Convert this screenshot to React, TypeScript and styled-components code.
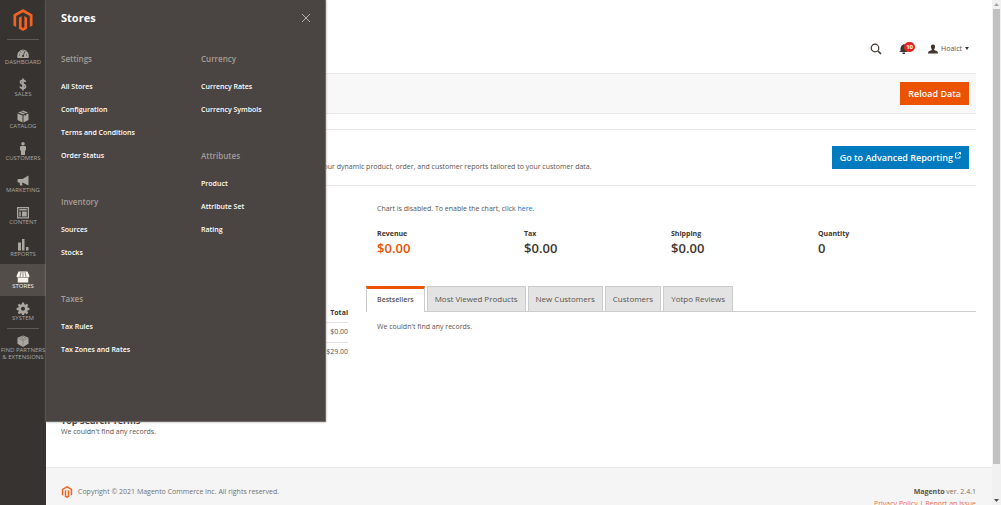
import React from "react";
import styled, { createGlobalStyle } from "styled-components";

const GlobalStyle = createGlobalStyle`
  * { box-sizing: border-box; }
  body {
    margin: 0;
    background: #fff;
    color: #5a534e;
    font-family: "Open Sans", "Noto Sans", sans-serif;
    font-size: 7px;
    line-height: 10px;
  }
  h1, h2, h3, p, ul, dl, dd { margin: 0; padding: 0; }
  ul { list-style: none; }
  a { color: inherit; text-decoration: none; }
  button { font: inherit; border: 0; padding: 0; cursor: pointer; }
  svg { display: block; }
`;

const Shell = styled.div`
  display: grid;
  grid-template-columns: 46px minmax(0, 1fr) 9px;
  height: 100vh;
  overflow: hidden;
`;

const Sidebar = styled.nav`
  background: #373330;
  color: #aaa6a0;
`;

const LogoLink = styled.a`
  display: flex;
  align-items: center;
  justify-content: center;
  height: 39px;
`;

const Divider = styled.div`
  height: 1px;
  margin: 0 7px;
  background: #5f5a55;
`;

const NavLink = styled.a<{ $active?: boolean }>`
  display: flex;
  flex-direction: column;
  align-items: center;
  height: 32px;
  padding-top: 6px;
  font-size: 6px;
  line-height: 7px;
  text-align: center;
  text-transform: uppercase;
  white-space: nowrap;
  background: ${(p) => (p.$active ? "#524d49" : "transparent")};
  color: ${(p) => (p.$active ? "#f7f3eb" : "#aaa6a0")};
`;

const NavIcon = styled.svg`
  width: 14px;
  height: 13px;
  fill: currentColor;
`;

const Main = styled.div`
  position: relative;
  display: flex;
  flex-direction: column;
  min-width: 0;
`;

const Menu = styled.section`
  position: absolute;
  top: 0;
  left: 0;
  z-index: 2;
  width: 280px;
  height: 422px;
  padding: 10px 0 0 15px;
  background: #4a4542;
  border-right: 1px solid #6f6b68;
  border-bottom: 1px solid #6f6b68;
  box-shadow: 0 0 2px #999;
  color: #fff;
`;

const MenuHeader = styled.header`
  display: flex;
  align-items: center;
  justify-content: space-between;
  height: 16px;
  padding-right: 14px;
  margin-bottom: 25px;
`;

const MenuTitle = styled.h2`
  font-size: 11px;
  line-height: 16px;
  font-weight: 700;
`;

const CloseButton = styled.button`
  background: none;
  color: #b5afa8;
`;

const MenuColumns = styled.div`
  display: grid;
  grid-template-columns: 140px 1fr;
`;

const MenuGroup = styled.section`
  margin-bottom: 27px;
`;

const GroupTitle = styled.h3`
  margin-bottom: 8px;
  color: #a79d95;
  font-size: 8px;
  line-height: 16px;
  font-weight: 600;
`;

const MenuLink = styled.a`
  display: block;
  line-height: 23px;
  font-weight: 600;
`;

const PageBody = styled.div`
  flex: 1 0 auto;
  padding: 0 16px 0 15px;
`;

const TopBar = styled.header`
  display: flex;
  align-items: center;
  justify-content: flex-end;
  gap: 13px;
  height: 73px;
  padding: 24px 7px 0 0;
`;

const IconButton = styled.button`
  position: relative;
  background: none;
  color: #41362f;
`;

const SearchButton = styled(IconButton)`
  padding-right: 4px;
`;

const Badge = styled.span`
  position: absolute;
  top: -2px;
  left: 5px;
  min-width: 11px;
  height: 10px;
  border-radius: 5px;
  background: #e22626;
  color: #fff;
  font-size: 6px;
  line-height: 10px;
  font-weight: 700;
`;

const UserButton = styled.button`
  display: flex;
  align-items: center;
  gap: 3px;
  background: none;
  color: #5a534e;
`;

const ActionBar = styled.div`
  display: flex;
  justify-content: flex-end;
  padding: 8px 7px;
  border-top: 1px solid #e8e8e8;
  border-bottom: 1px solid #e8e8e8;
  background: #f8f8f8;
`;

const ActionButton = styled.button<{ $tone: "orange" | "blue" }>`
  display: flex;
  align-items: center;
  gap: 2px;
  height: 23px;
  padding: 0 8px;
  background: ${(p) => (p.$tone === "orange" ? "#eb5202" : "#007bbf")};
  color: #fff;
  font-size: 9px;
  font-weight: 600;
  white-space: nowrap;
`;

const Reporting = styled.section`
  display: flex;
  align-items: flex-start;
  justify-content: space-between;
  height: 57px;
  margin-top: 15px;
  padding: 16px 7px 0 0;
  border-top: 1px solid #e8e8e8;
  border-bottom: 1px solid #e8e8e8;
`;

const ReportingText = styled.p`
  padding: 16px 0 0 16px;
  white-space: nowrap;
`;

const Dashboard = styled.div`
  display: grid;
  grid-template-columns: 8fr 17fr;
  gap: 18px;
`;

const Summary = styled.div`
  padding-top: 118px;
`;

const OrdersTable = styled.table`
  width: 100%;
  margin-bottom: 53px;
  border-collapse: collapse;
  text-align: right;
  th { height: 18px; padding: 0; color: #41362f; font-weight: 700; border-bottom: 1px solid #e3e3e3; }
  td { height: 20px; padding: 0; border-bottom: 1px solid #e3e3e3; }
  tr:last-child td { border-bottom: 0; }
`;

const SectionTitle = styled.h2`
  color: #41362f;
  font-size: 9px;
  line-height: 12px;
  font-weight: 700;
`;

const Stats = styled.div`
  padding-top: 18px;
`;

const ChartNote = styled.p`
  padding: 0 11px;
  margin-bottom: 15px;
  a { color: #007bdb; }
`;

const Totals = styled.dl`
  display: grid;
  grid-template-columns: repeat(4, 1fr);
  padding: 0 11px;
  margin-bottom: 29px;
  color: #41362f;
`;

const TotalLabel = styled.dt`
  line-height: 10px;
  font-weight: 700;
`;

const TotalValue = styled.dd<{ $accent?: boolean }>`
  font-size: 13px;
  line-height: 18px;
  font-weight: 600;
  color: ${(p) => (p.$accent ? "#eb5202" : "#41362f")};
`;

const Tabs = styled.div`
  display: flex;
  gap: 2px;
  border-bottom: 1px solid #ccc;
`;

const Tab = styled.button<{ $active?: boolean }>`
  height: ${(p) => (p.$active ? "26px" : "25px")};
  padding: ${(p) => (p.$active ? "0 10px 2px" : "0 7px")};
  margin-bottom: ${(p) => (p.$active ? "-1px" : "0")};
  border: 1px solid #ccc;
  border-top: ${(p) => (p.$active ? "3px solid #eb5202" : "1px solid #ccc")};
  border-bottom: 0;
  background: ${(p) => (p.$active ? "#fff" : "#e3e3e3")};
  color: #5a534e;
  font-size: ${(p) => (p.$active ? "7px" : "8px")};
  font-weight: ${(p) => (p.$active ? 600 : 400)};
  white-space: nowrap;
`;

const TabPanel = styled.div`
  padding: 10px 11px;
`;

const Footer = styled.footer`
  display: flex;
  flex: none;
  justify-content: space-between;
  height: 60px;
  margin-bottom: -22px;
  padding: 18px 16px 0 15px;
  border-top: 1px solid #e8e8e8;
  background: #f5f5f5;
  color: #757069;
  line-height: 12px;
`;

const Copyright = styled.p`
  display: flex;
  align-items: center;
  align-self: flex-start;
  gap: 5px;
`;

const FooterLinks = styled.div`
  text-align: right;
  a { color: #ef6d4f; }
  strong { color: #5a534e; }
`;

const ScrollTrack = styled.div`
  display: flex;
  flex-direction: column;
  align-items: center;
  padding: 3px 1px;
  background: #f1f1f1;
`;

const ScrollThumb = styled.div`
  flex: 13;
  width: 7px;
  margin-top: 3px;
  background: #c1c1c1;
`;

const ScrollRest = styled.div`
  flex: 1;
`;

const MagentoMark = ({ size }: { size: number }) => (
  <svg width={size} height={size} viewBox="0 0 24 24" fill="#f26322" aria-hidden="true">
    <path d="M12 24l-4.455-2.572v-12l2.97-1.715v12.001l1.485.902 1.485-.902V7.713l2.971 1.715v12L12 24zM22.391 6v12l-2.969 1.714V7.713L12 3.43 4.574 7.713v12.001L1.609 18V6L12 0l10.391 6z" />
  </svg>
);

const boxIcon = (
  <>
    <path d="M14 1L24 5L14 9L4 5ZM3 7L13 11V25L3 20ZM15 11L25 7V20L15 25Z" />
    <path d="M9 3L19 7V12" fill="none" stroke="#373330" strokeWidth="1.5" />
  </>
);

const navItems: { label: string; active?: boolean; icon: React.ReactNode }[] = [
  {
    label: "Dashboard",
    icon: (
      <>
        <path d="M3 24a11.5 13 0 1 1 22 0Z" />
        <path d="M14 20L18 10M6 18h2M9 11l1 2M14 8v2M20 18h2" stroke="#373330" strokeWidth="1.6" />
        <circle cx="14" cy="20" r="2.2" fill="#373330" />
      </>
    ),
  },
  {
    label: "Sales",
    icon: (
      <path
        d="M19 8C18 3.500 9 3.500 9 8.500C9 13 19 11.500 19 17C19 22 9 22 8.500 17M14 1V25"
        fill="none"
        stroke="currentColor"
        strokeWidth="3.400"
      />
    ),
  },
  { label: "Catalog", icon: boxIcon },
  {
    label: "Customers",
    icon: (
      <>
        <circle cx="14" cy="3.500" r="3.500" />
        <path d="M10 8h8q2 0 2 2v7h-2v9h-8v-9H8v-7q0-2 2-2Z" />
      </>
    ),
  },
  {
    label: "Marketing",
    icon: <path d="M25 3V23L14 17.500H12L13 23H8L7 17H4Q1 13.500 4 10H13Z" />,
  },
  {
    label: "Content",
    icon: (
      <>
        <path d="M2 2h24v23H2ZM4.500 4.500v18h19V4.500Z" fillRule="evenodd" />
        <path d="M6.500 6h15v3H6.500ZM6.500 11h3v10H6.500ZM12 11h9.500v10H12Z" />
      </>
    ),
  },
  { label: "Reports", icon: <path d="M4 9h6V25H4ZM12 2h5v23h-5ZM20 18h5v7h-5Z" /> },
  {
    label: "Stores",
    active: true,
    icon: (
      <>
        <path d="M5 3h18l4 9q0 3-3 3H4q-3 0-3-3ZM3.500 16h21v9h-21Z" />
        <path d="M10 4L8 14M14 4v10M18 4l2 10" stroke="#524d49" strokeWidth="1.200" />
      </>
    ),
  },
  {
    label: "System",
    icon: (
      <path
        fillRule="evenodd"
        d="M12 1h4l.6 3.400 2.200.9 2.900-2 2.800 2.800-2 2.900.9 2.200 3.400.6v4l-3.400.6-.9 2.200 2 2.900-2.800 2.800-2.900-2-2.200.9-.6 3.400h-4l-.6-3.400-2.200-.9-2.900 2-2.800-2.800 2-2.900-.9-2.200-3.400-.6v-4l3.400-.6.9-2.200-2-2.900 2.800-2.800 2.900 2 2.200-.9ZM14 9.500a4 4 0 1 0 0 8a4 4 0 1 0 0-8Z"
      />
    ),
  },
];

const menuColumns = [
  [
    { title: "Settings", links: ["All Stores", "Configuration", "Terms and Conditions", "Order Status"] },
    { title: "Inventory", links: ["Sources", "Stocks"] },
    { title: "Taxes", links: ["Tax Rules", "Tax Zones and Rates"] },
  ],
  [
    { title: "Currency", links: ["Currency Rates", "Currency Symbols"] },
    { title: "Attributes", links: ["Product", "Attribute Set", "Rating"] },
  ],
];

const totals = [
  { label: "Revenue", value: "$0.00", accent: true },
  { label: "Tax", value: "$0.00" },
  { label: "Shipping", value: "$0.00" },
  { label: "Quantity", value: "0" },
];

const tabs = ["Bestsellers", "Most Viewed Products", "New Customers", "Customers", "Yotpo Reviews"];

export default function App() {
  return (
    <Shell>
      <GlobalStyle />
      <Sidebar>
        <LogoLink href="#" aria-label="Magento">
          <MagentoMark size={22} />
        </LogoLink>
        <Divider />
        {navItems.map((item) => (
          <NavLink href="#" key={item.label} $active={item.active}>
            <NavIcon viewBox="0 0 28 26" aria-hidden="true">{item.icon}</NavIcon>
            {item.label}
          </NavLink>
        ))}
        <Divider />
        <NavLink href="#">
          <NavIcon viewBox="0 0 28 26" aria-hidden="true">
            <path d="M14 1L26 6V19L14 26L2 19V6Z" />
            <path d="M2 7L14 12L26 7M14 12V25" fill="none" stroke="#6b6661" strokeWidth="1" />
            <path d="M8 6h4M16 6h4M12 3h4M12 9h4" stroke="#5f5a55" strokeWidth="1.500" />
          </NavIcon>
          <span>
            Find Partners
            <br />& Extensions
          </span>
        </NavLink>
      </Sidebar>

      <Main>
        <Menu>
          <MenuHeader>
            <MenuTitle>Stores</MenuTitle>
            <CloseButton aria-label="Close">
              <svg width="10" height="10" viewBox="0 0 10 10" fill="none" stroke="currentColor">
                <path d="M1 1L9 9M9 1L1 9" />
              </svg>
            </CloseButton>
          </MenuHeader>
          <MenuColumns>
            {menuColumns.map((groups, i) => (
              <div key={i}>
                {groups.map((group) => (
                  <MenuGroup key={group.title}>
                    <GroupTitle>{group.title}</GroupTitle>
                    <ul>
                      {group.links.map((link) => (
                        <li key={link}>
                          <MenuLink href="#">{link}</MenuLink>
                        </li>
                      ))}
                    </ul>
                  </MenuGroup>
                ))}
              </div>
            ))}
          </MenuColumns>
        </Menu>

        <PageBody>
          <TopBar>
            <SearchButton aria-label="Search">
              <svg width="12" height="12" viewBox="0 0 12 12" fill="none" stroke="currentColor">
                <circle cx="5" cy="5" r="3.800" strokeWidth="1.200" />
                <path d="M8 8L11 11" strokeWidth="1.600" />
              </svg>
            </SearchButton>
            <IconButton aria-label="Notifications">
              <svg width="16" height="10" viewBox="0 0 16 10" fill="currentColor">
                <path d="M5 0Q8 1 8 4V7L9 8H0L1.500 7V4Q2 1 5 0ZM3.500 8.500H6V10H3.500Z" />
              </svg>
              <Badge>10</Badge>
            </IconButton>
            <UserButton>
              <svg width="10" height="10" viewBox="0 0 11 10" fill="#41362f">
                <path d="M5.500 0C7.500 0 8 1.500 7.700 3C7.500 4.500 6.800 5 6.800 6L10 7.500Q11 8 11 10H0Q0 8 1 7.500L4.200 6C4.200 5 3.500 4.500 3.300 3C3 1.500 3.500 0 5.500 0Z" />
              </svg>
              Hoaict
              <svg width="4" height="3" viewBox="0 0 4 3" fill="#41362f">
                <path d="M0 0H4L2 3Z" />
              </svg>
            </UserButton>
          </TopBar>

          <ActionBar>
            <ActionButton $tone="orange">Reload Data</ActionButton>
          </ActionBar>

          <Reporting>
            <ReportingText>
              Gain new insights and take command of your business' performance, using our dynamic product, order, and
              customer reports tailored to your customer data.
            </ReportingText>
            <ActionButton $tone="blue">
              Go to Advanced Reporting
              <svg width="6" height="11" viewBox="0 0 6 11" fill="none" stroke="currentColor">
                <path d="M2.500 1H.5V6H5V4M2.500 3.500L5.300 .7M3.500 .5H5.500V2.500" strokeWidth="0.900" />
              </svg>
            </ActionButton>
          </Reporting>

          <Dashboard>
            <Summary>
              <OrdersTable>
                <thead>
                  <tr>
                    <th scope="col">Total</th>
                  </tr>
                </thead>
                <tbody>
                  <tr>
                    <td>$0.00</td>
                  </tr>
                  <tr>
                    <td>$29.00</td>
                  </tr>
                </tbody>
              </OrdersTable>
              <SectionTitle>Top Search Terms</SectionTitle>
              <p>We couldn't find any records.</p>
            </Summary>

            <Stats>
              <ChartNote>
                Chart is disabled. To enable the chart, click <a href="#">here</a>.
              </ChartNote>
              <Totals>
                {totals.map((total) => (
                  <div key={total.label}>
                    <TotalLabel>{total.label}</TotalLabel>
                    <TotalValue $accent={total.accent}>{total.value}</TotalValue>
                  </div>
                ))}
              </Totals>
              <Tabs role="tablist">
                {tabs.map((tab, i) => (
                  <Tab key={tab} role="tab" aria-selected={i === 0} $active={i === 0}>
                    {tab}
                  </Tab>
                ))}
              </Tabs>
              <TabPanel role="tabpanel">We couldn't find any records.</TabPanel>
            </Stats>
          </Dashboard>
        </PageBody>

        <Footer>
          <Copyright>
            <MagentoMark size={12} />
            Copyright © 2021 Magento Commerce Inc. All rights reserved.
          </Copyright>
          <FooterLinks>
            <p>
              <strong>Magento</strong> ver. 2.4.1
            </p>
            <p>
              <a href="#">Privacy Policy</a> | <a href="#">Report an Issue</a>
            </p>
          </FooterLinks>
        </Footer>
      </Main>

      <ScrollTrack aria-hidden="true">
        <svg width="5" height="3" viewBox="0 0 5 3" fill="#a3a3a3">
          <path d="M0 3H5L2.500 0Z" />
        </svg>
        <ScrollThumb />
        <ScrollRest />
        <svg width="5" height="3" viewBox="0 0 5 3" fill="#505050">
          <path d="M0 0H5L2.500 3Z" />
        </svg>
      </ScrollTrack>
    </Shell>
  );
}
